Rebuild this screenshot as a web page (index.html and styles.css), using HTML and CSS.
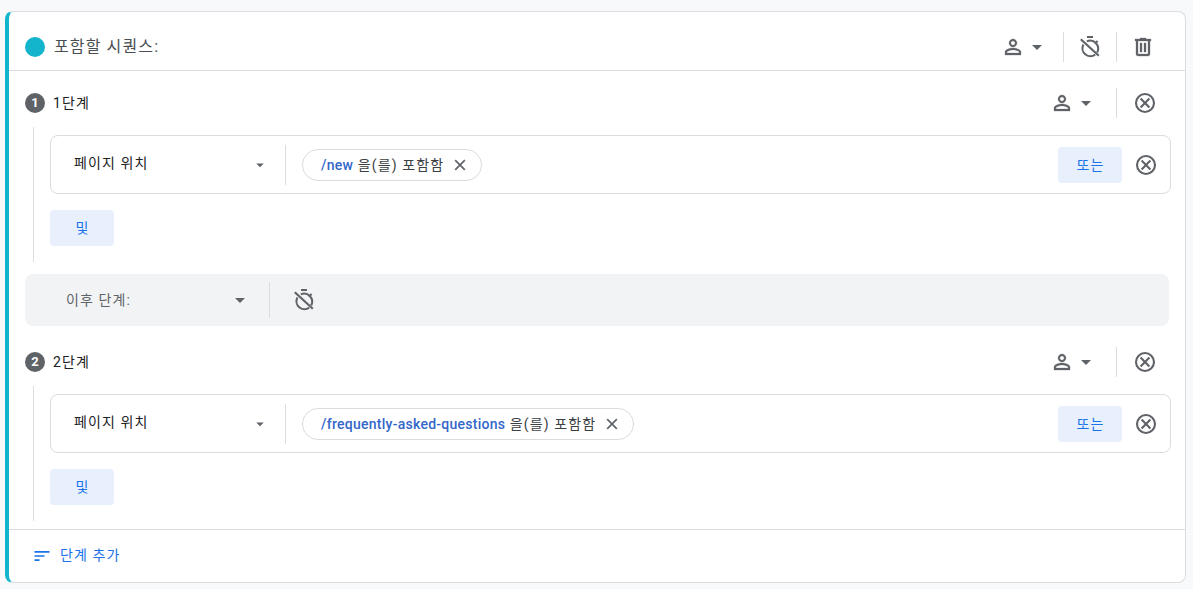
FILE: index.html
```html
<!DOCTYPE html>
<html lang="ko">
<head>
<meta charset="utf-8">
<title>시퀀스</title>
<link rel="stylesheet" href="styles.css">
</head>
<body>
<svg class="defs" width="0" height="0" aria-hidden="true">
  <symbol id="i-person" viewBox="0 0 24 24"><path stroke="#5f6368" stroke-width=".3" d="M12 5.9c1.16 0 2.1.94 2.1 2.1s-.94 2.1-2.1 2.1S9.9 9.16 9.9 8s.94-2.1 2.1-2.1m0 9c2.97 0 6.1 1.46 6.1 2.1v1.1H5.9V17c0-.64 3.13-2.1 6.1-2.1M12 4C9.79 4 8 5.79 8 8s1.79 4 4 4 4-1.79 4-4-1.79-4-4-4zm0 9c-2.67 0-8 1.34-8 4v3h16v-3c0-2.66-5.33-4-8-4z"/></symbol>
  <symbol id="i-caret" viewBox="0 0 24 24"><path d="M7 10l5 5 5-5z"/></symbol>
  <symbol id="i-trash" viewBox="0 0 24 24"><path stroke="#5f6368" stroke-width=".3" d="M15 4V3H9v1H4v2h1v13c0 1.1.9 2 2 2h10c1.1 0 2-.9 2-2V6h1V4h-5zm2 15H7V6h10v13zM9 8h2v9H9zm4 0h2v9h-2z"/></symbol>
  <symbol id="i-cancel" viewBox="0 0 24 24"><g fill="none" stroke="#5f6368" stroke-width="2.1"><circle cx="12" cy="12" r="9"/><path d="M7.6 7.6l8.8 8.8M16.4 7.6l-8.8 8.8"/></g></symbol>
  <symbol id="i-close" viewBox="0 0 24 24"><path stroke="#5f6368" stroke-width=".5" d="M19 6.41L17.59 5 12 10.59 6.41 5 5 6.41 10.59 12 5 17.59 6.41 19 12 13.41 17.59 19 19 17.59 13.41 12 19 6.41z"/></symbol>
  <symbol id="i-sort" viewBox="0 0 24 24"><path d="M3 18h6v-2H3v2zM3 6v2h18V6H3zm0 7h12v-2H3v2z"/></symbol>
  <symbol id="i-timer" viewBox="0 0 24 24"><g fill="none" stroke="#5f6368" stroke-width="2.1"><path d="M9 2h6M18 7.5l1.6-1.6"/><path d="M8.8 6.4A8 8 0 0 1 19.2 17.4M17.2 19.6A8 8 0 0 1 5.4 9.4"/><path d="M2.8 4.2L20.8 20.8" stroke-width="2.2"/></g></symbol>
</svg>

<main class="page">
  <section class="card">
    <header class="card-head">
      <span class="dot"></span>
      <span class="title">포함할 시퀀스:</span>
      <div class="tools">
        <span class="scope"><svg class="ic ic-24"><use href="#i-person"/></svg><svg class="ic ic-24"><use href="#i-caret"/></svg></span>
        <span class="vline"></span>
        <svg class="ic ic-24 tool"><use href="#i-timer"/></svg>
        <span class="vline"></span>
        <svg class="ic ic-24 tool"><use href="#i-trash"/></svg>
      </div>
    </header>

    <div class="card-body">
      <div class="step step-first">
        <div class="step-head">
          <span class="badge">1</span>
          <span class="step-name">1단계</span>
          <div class="tools step-tools">
            <span class="scope"><svg class="ic ic-24"><use href="#i-person"/></svg><svg class="ic ic-24"><use href="#i-caret"/></svg></span>
            <span class="vline"></span>
            <svg class="ic ic-24 tool"><use href="#i-cancel"/></svg>
          </div>
        </div>
        <div class="rail">
          <div class="cond">
            <div class="select"><span class="select-label">페이지 위치</span><svg class="ic ic-18"><use href="#i-caret"/></svg></div>
            <span class="vline vline-tall"></span>
            <span class="chip"><b>/new</b> 을(를) 포함함<svg class="ic ic-18 chip-x"><use href="#i-close"/></svg></span>
            <button class="btn btn-or">또는</button>
            <svg class="ic ic-24 cond-x"><use href="#i-cancel"/></svg>
          </div>
          <button class="btn btn-and">및</button>
        </div>
      </div>

      <div class="between">
        <div class="between-select"><span>이후 단계:</span><svg class="ic ic-24"><use href="#i-caret"/></svg></div>
        <span class="vline"></span>
        <svg class="ic ic-24 between-timer"><use href="#i-timer"/></svg>
      </div>

      <div class="step">
        <div class="step-head">
          <span class="badge">2</span>
          <span class="step-name">2단계</span>
          <div class="tools step-tools">
            <span class="scope"><svg class="ic ic-24"><use href="#i-person"/></svg><svg class="ic ic-24"><use href="#i-caret"/></svg></span>
            <span class="vline"></span>
            <svg class="ic ic-24 tool"><use href="#i-cancel"/></svg>
          </div>
        </div>
        <div class="rail">
          <div class="cond">
            <div class="select"><span class="select-label">페이지 위치</span><svg class="ic ic-18"><use href="#i-caret"/></svg></div>
            <span class="vline vline-tall"></span>
            <span class="chip"><b>/frequently-asked-questions</b> 을(를) 포함함<svg class="ic ic-18 chip-x"><use href="#i-close"/></svg></span>
            <button class="btn btn-or">또는</button>
            <svg class="ic ic-24 cond-x"><use href="#i-cancel"/></svg>
          </div>
          <button class="btn btn-and">및</button>
        </div>
      </div>
    </div>

    <footer class="card-foot">
      <svg class="ic ic-20 foot-ic"><use href="#i-sort"/></svg>
      <span class="foot-label">단계 추가</span>
    </footer>
  </section>
</main>
</body>
</html>
```

FILE: styles.css
```css
* { box-sizing: border-box; }
html, body { margin: 0; height: 100%; }
body {
  background: #f8f9fa;
  color: #3c4043;
  font: 14px/20px Roboto, "Noto Sans CJK KR", sans-serif;
  letter-spacing: .08em;
  overflow: hidden;
}
.defs { position: absolute; }
.page { padding: 11px 7px 6px 5px; }

.card {
  background: #fff;
  border: 1px solid #dadce0;
  border-left: 4px solid #12b5cb;
  border-radius: 8px;
  height: 572px;
  display: flex;
  flex-direction: column;
}
.card-head {
  height: 59px;
  flex: none;
  display: flex;
  align-items: center;
  padding: 11px 0 0 16px;
  border-bottom: 1px solid #dadce0;
}
.dot {
  width: 20px;
  height: 20px;
  border-radius: 50%;
  background: #12b5cb;
  flex: none;
}
.title { margin-left: 9px; color: #4a4e52; font-size: 16px; }

.ic { display: block; fill: #5f6368; flex: none; }
.ic-18 { width: 18px; height: 18px; }
.ic-20 { width: 20px; height: 20px; }
.ic-24 { width: 24px; height: 24px; }

.tools { margin-left: auto; display: flex; align-items: center; padding-right: 30px; }
.scope { display: flex; align-items: center; margin-right: 14px; }
.vline { display: block; width: 1px; height: 30px; background: #dadce0; flex: none; }
.vline-tall { height: 40px; }
.tool { margin: 0 14px; }
.tool:last-child { margin-right: 0; }
.step-tools { padding-right: 28px; }
.step-tools .scope { margin-right: 18px; }
.step-tools .tool { margin-left: 16px; }

.card-body { flex: 1; padding: 0 16px; }
.step { padding-top: 16px; }
.step-first { padding-top: 12px; }
.step-head { height: 40px; display: flex; align-items: center; margin-bottom: 4px; margin-right: -16px; }
.badge {
  width: 20px;
  height: 20px;
  border-radius: 50%;
  background: #5f6368;
  color: #fff;
  font-size: 13px;
  font-weight: 700;
  line-height: 20px;
  letter-spacing: 0;
  text-align: center;
  flex: none;
}
.step-name { margin-left: 8px; color: #202124; }

.rail {
  margin-left: 8px;
  border-left: 1px solid #dadce0;
  padding: 8px 0 16px 16px;
}
.cond {
  height: 59px;
  margin-right: -2px;
  border: 1px solid #dadce0;
  border-radius: 8px;
  display: flex;
  align-items: center;
}
.select {
  width: 234px;
  padding: 0 16px 0 23px;
  display: flex;
  align-items: center;
  justify-content: space-between;
  color: #202124;
  flex: none;
}
.select-label { margin-top: -3px; }
.chip {
  height: 32px;
  margin-left: 16px;
  padding: 0 5px 0 18px;
  border: 1px solid #dadce0;
  border-radius: 16px;
  display: flex;
  align-items: center;
  color: #3c4043;
  white-space: pre;
}
.chip b { font-weight: 500; color: #3367c9; letter-spacing: .26px; }
.chip-x { margin-left: 7px; margin-right: 7px; }
.btn {
  display: block;
  width: 64px;
  height: 36px;
  border: 0;
  border-radius: 4px;
  background: #e8f0fe;
  color: #1a73e8;
  font: inherit;
  letter-spacing: inherit;
  padding: 0 0 0 1px;
}
.btn-or { margin-left: auto; }
.cond-x { margin: 0 12px; }
.btn-and { margin-top: 16px; }

.between {
  height: 52px;
  margin-top: 12px;
  background: #f1f3f4;
  border-radius: 8px;
  display: flex;
  align-items: center;
}
.between-select {
  width: 244px;
  padding: 0 17px 0 41px;
  display: flex;
  align-items: center;
  justify-content: space-between;
  color: #5f6368;
  flex: none;
}
.between .vline { height: 36px; }
.between-timer { margin-left: 22px; }

.card-foot {
  height: 53px;
  flex: none;
  margin-top: 8px;
  border-top: 1px solid #dadce0;
  display: flex;
  align-items: center;
  padding: 0 0 1px 23px;
  color: #1a73e8;
}
.foot-ic { fill: #1a73e8; margin-right: 8px; }
.foot-label { margin-top: -1px; }
```
